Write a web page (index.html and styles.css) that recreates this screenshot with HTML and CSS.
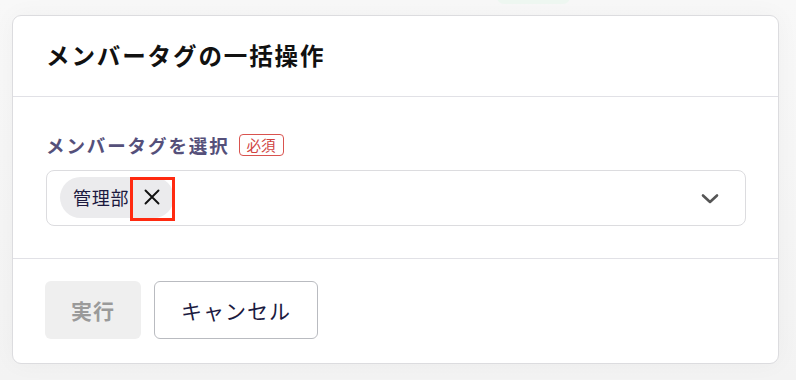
FILE: index.html
```html
<!DOCTYPE html>
<html lang="ja">
<head>
<meta charset="utf-8">
<link rel="stylesheet" href="styles.css">
</head>
<body>
<div class="page">
  <div class="top-pill"></div>
  <div class="card">
    <div class="card-header">
      <h1 class="title">メンバータグの一括操作</h1>
    </div>
    <div class="card-body">
      <div class="label-row">
        <span class="label">メンバータグを選択</span>
        <span class="required">必須</span>
      </div>
      <div class="select">
        <div class="chips">
          <span class="chip">
            <span class="chip-text">管理部</span>
            <span class="chip-remove">
              <svg width="16" height="16" viewBox="0 0 16 16"><path d="M1.5 1.5 L14.5 14.5 M14.5 1.5 L1.5 14.5" stroke="#111" stroke-width="1.9" stroke-linecap="round"/></svg>
              <span class="highlight"></span>
            </span>
          </span>
        </div>
        <svg class="chevron" width="18" height="12" viewBox="0 0 18 12"><path d="M2 2.5 L9 9 L16 2.5" fill="none" stroke="#555" stroke-width="2.6" stroke-linecap="round" stroke-linejoin="round"/></svg>
      </div>
    </div>
    <div class="card-footer">
      <button class="btn btn-disabled">実行</button>
      <button class="btn btn-outline">キャンセル</button>
    </div>
  </div>
</div>
</body>
</html>
```
FILE: styles.css
```css
* { box-sizing: border-box; }
html, body {
  margin: 0;
  padding: 0;
  background: #f5f5f5;
  font-family: "Noto Sans CJK JP", "Noto Sans", sans-serif;
}
.page {
  position: relative;
  width: 796px;
  height: 380px;
  padding: 15px 17px 0 12px;
  background: linear-gradient(180deg, #f8f8f8 0%, #f3f3f3 100%);
}
.top-pill {
  position: absolute;
  left: 497px;
  top: -10px;
  width: 73px;
  height: 14px;
  border-radius: 7px;
  background: #eef7f1;
}
.card {
  width: 767px;
  height: 349px;
  background: #fff;
  border: 1px solid #dcdcdf;
  border-radius: 9px;
  box-shadow: 0 0 24px rgba(0,0,0,0.035);
  display: flex;
  flex-direction: column;
}
.card-header {
  height: 81px;
  padding: 0 0 0 33px;
  display: flex;
  align-items: center;
  border-bottom: 1px solid #e1e1e6;
}
.title {
  margin: 0;
  font-size: 23.5px;
  font-weight: 700;
  color: #111;
  letter-spacing: 1.9px;
  line-height: 1;
}
.card-body {
  height: 162px;
  padding: 37px 32px 0 33px;
  border-bottom: 1px solid #e1e1e6;
}
.label-row {
  display: flex;
  align-items: center;
  gap: 9px;
  height: 22px;
}
.label {
  font-size: 18.5px;
  font-weight: 700;
  color: #55507a;
  letter-spacing: 1.9px;
  line-height: 1;
}
.required {
  height: 22px;
  padding: 0 7px;
  border: 1px solid #d9534f;
  border-radius: 4px;
  color: #d0433f;
  font-size: 14.5px;
  line-height: 20px;
}
.select {
  margin-top: 14px;
  height: 56px;
  border: 1px solid #dcdcdf;
  border-radius: 8px;
  display: flex;
  align-items: center;
  justify-content: space-between;
  padding: 0 26px 0 13px;
}
.chips { display: flex; }
.chip {
  display: flex;
  align-items: center;
  height: 41px;
  margin-top: -2px;
  padding: 0 0 0 13px;
  border-radius: 21px;
  background: #ebebed;
}
.chip-text {
  font-size: 18px;
  color: #1c1a3f;
  letter-spacing: 0.8px;
  line-height: 1;
}
.chip-remove {
  position: relative;
  width: 44px;
  height: 41px;
  display: flex;
  align-items: center;
  justify-content: center;
  margin-left: 1px;
}
.highlight {
  position: absolute;
  left: 0;
  top: 0;
  width: 45px;
  height: 44px;
  border: 3px solid #ff2a10;
}
.chevron { margin-top: 1px; }
.card-footer {
  flex: 1;
  padding: 22px 0 0 32px;
  display: flex;
  gap: 13px;
  align-items: flex-start;
}
.btn {
  height: 58px;
  border-radius: 6px;
  font-family: inherit;
  font-size: 21px;
  letter-spacing: 1px;
  cursor: pointer;
}
.btn-disabled {
  width: 96px;
  border: none;
  background: #efefef;
  color: #9a9a9a;
  font-weight: 700;
}
.btn-outline {
  width: 164px;
  border: 1px solid #b9bbc0;
  background: #fff;
  color: #1c1a3f;
}
```
